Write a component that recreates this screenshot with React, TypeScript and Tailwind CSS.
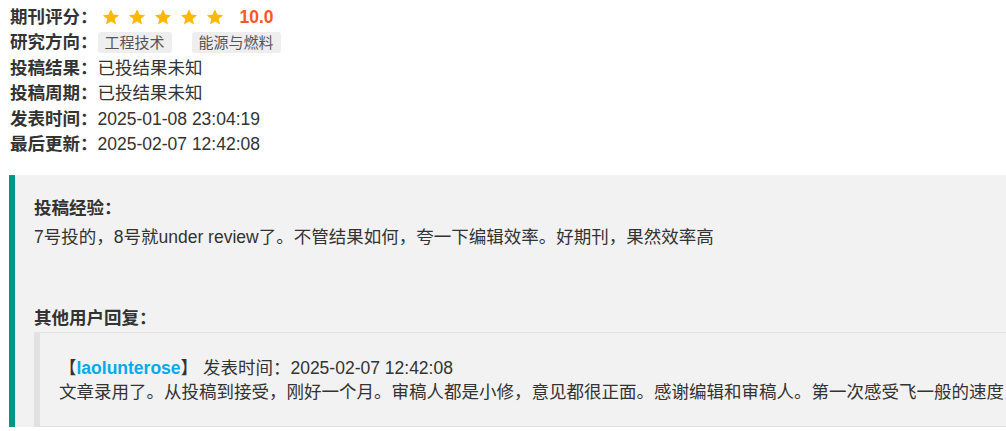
const font = {
  fontFamily: '"Liberation Sans", Arial, "Noto Sans CJK SC", sans-serif',
};

const Star = () => (
  <svg viewBox="0 0 24 24" className="h-[18px] w-[18px]" fill="#FFB800">
    <path d="M12 1.8l3.1 7 7.6.7-5.8 5 1.8 7.5L12 18l-6.7 4 1.8-7.5-5.8-5 7.6-.7z" />
  </svg>
);

const Row = ({ label, children }: { label: string; children: React.ReactNode }) => (
  <div className="flex h-[25.5px] items-center">
    <span className="shrink-0 font-bold text-[#333]">{label}</span>
    <div className="flex items-center">{children}</div>
  </div>
);

const Tag = ({ text }: { text: string }) => (
  <span className="mr-[20px] rounded-[3px] bg-[#eeeeee] px-[7px] text-[15px] leading-[21px] text-[#555]">
    {text}
  </span>
);

export default function App() {
  return (
    <div className="w-full overflow-hidden bg-white text-[17.5px] text-[#333]" style={font}>
      <div className="pl-[10px] pt-[4px]">
        <Row label="期刊评分：">
          <div className="ml-[4px] flex gap-[8px]">
            {[0, 1, 2, 3, 4].map((i) => (
              <Star key={i} />
            ))}
          </div>
          <span className="ml-[16px] font-bold text-[#FF5722]">10.0</span>
        </Row>
        <Row label="研究方向：">
          <Tag text="工程技术" />
          <Tag text="能源与燃料" />
        </Row>
        <Row label="投稿结果：">已投结果未知</Row>
        <Row label="投稿周期：">已投结果未知</Row>
        <Row label="发表时间：">2025-01-08 23:04:19</Row>
        <Row label="最后更新：">2025-02-07 12:42:08</Row>
      </div>

      <div className="ml-[9px] mt-[18px] w-[1300px] border-l-[6px] border-[#009688] bg-[#f2f2f2] pl-[19px] pt-[21px]">
        <div className="font-bold leading-[24px]">投稿经验：</div>
        <div className="mt-[5px] leading-[24px]">
          7号投的，8号就under review了。不管结果如何，夸一下编辑效率。好期刊，果然效率高
        </div>

        <div className="mt-[57px] font-bold leading-[24px]">其他用户回复：</div>
        <div className="mt-[2px] border border-l-[6px] border-[#e2e2e2] bg-[#f2f2f2] pb-[22px] pl-[19px] pt-[23px]">
          <div className="leading-[24px]">
            【<span className="font-bold text-[#01AAED]">laolunterose</span>】 发表时间：2025-02-07 12:42:08
          </div>
          <div className="leading-[24px]">
            文章录用了。从投稿到接受，刚好一个月。审稿人都是小修，意见都很正面。感谢编辑和审稿人。第一次感受飞一般的速度，
          </div>
        </div>
      </div>
    </div>
  );
}
